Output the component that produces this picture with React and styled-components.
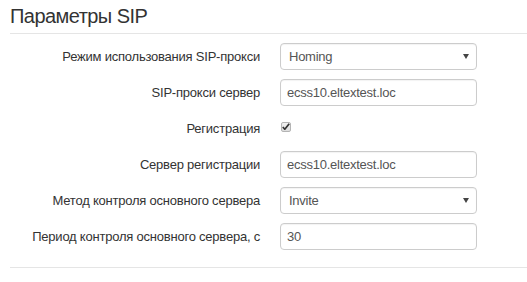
import styled, { createGlobalStyle } from "styled-components";

const GlobalStyle = createGlobalStyle`
  body {
    margin: 0;
    background: #fff;
    font-family: "Liberation Sans", Arial, sans-serif;
    color: #333;
  }
`;

const rows = [
  { label: "Режим использования SIP-прокси", type: "select", value: "Homing" },
  { label: "SIP-прокси сервер", type: "input", value: "ecss10.eltextest.loc" },
  { label: "Регистрация", type: "checkbox", checked: true },
  { label: "Сервер регистрации", type: "input", value: "ecss10.eltextest.loc" },
  { label: "Метод контроля основного сервера", type: "select", value: "Invite" },
  { label: "Период контроля основного сервера, с", type: "input", value: "30" },
];

export default function App() {
  return (
    <>
      <GlobalStyle />
      <Fieldset>
        <Legend>Параметры SIP</Legend>
        <Form>
          {rows.map((row) => (
            <Row key={row.label}>
              <Label>{row.label}</Label>
              {row.type === "select" && (
                <SelectWrap>
                  <Select defaultValue={row.value}>
                    <option value={row.value}>{row.value}</option>
                  </Select>
                </SelectWrap>
              )}
              {row.type === "input" && <Input defaultValue={row.value} />}
              {row.type === "checkbox" && (
                <Check>
                  <svg width="8" height="7" viewBox="0 0 8 7">
                    <path d="M0.8 4 L2.8 6.2 L7.2 0.8" fill="none" stroke="#333" strokeWidth="1.7" />
                  </svg>
                </Check>
              )}
            </Row>
          ))}
        </Form>
      </Fieldset>
    </>
  );
}

const Fieldset = styled.div`
  padding: 0 0 0 10px;
`;

const Legend = styled.div`
  margin-top: 4px;
  padding-bottom: 5px;
  font-size: 20px;
  letter-spacing: -0.55px;
  line-height: 24px;
  color: #333;
  border-bottom: 1px solid #e5e5e5;
`;

const Form = styled.div`
  display: flex;
  flex-direction: column;
  gap: 9px;
  padding: 9px 0 17px;
  border-bottom: 1px solid #e5e5e5;
`;

const Row = styled.div`
  display: grid;
  grid-template-columns: 250px 197px;
  column-gap: 20px;
  align-items: center;
  height: 27px;
`;

const Label = styled.label`
  text-align: right;
  font-size: 13px;
  letter-spacing: -0.22px;
  color: #333;
`;

const fieldBase = `
  box-sizing: border-box;
  width: 197px;
  height: 27px;
  border: 1px solid #ccc;
  border-radius: 4px;
  background: #fff;
  font-family: "Liberation Sans", Arial, sans-serif;
  font-size: 13px;
  letter-spacing: -0.25px;
  color: #555;
  outline: none;
  box-shadow: inset 0 1px 1px rgba(0, 0, 0, 0.05);
`;

const Input = styled.input`
  ${fieldBase}
  padding: 0 6px;
`;

const SelectWrap = styled.div`
  position: relative;
  width: 197px;

  &::after {
    content: "";
    position: absolute;
    right: 8px;
    top: 11px;
    border-left: 3px solid transparent;
    border-right: 3px solid transparent;
    border-top: 5px solid #444;
    pointer-events: none;
  }
`;

const Select = styled.select`
  ${fieldBase}
  appearance: none;
  padding: 0 20px 0 8px;
`;

const Check = styled.span`
  box-sizing: border-box;
  display: flex;
  align-items: center;
  justify-content: center;
  width: 10px;
  height: 10px;
  margin: -4px 0 0 1px;
  border: 1px solid #b4b4b4;
  border-radius: 2px;
  background: linear-gradient(#f2f2f2, #dcdcdc);
`;
